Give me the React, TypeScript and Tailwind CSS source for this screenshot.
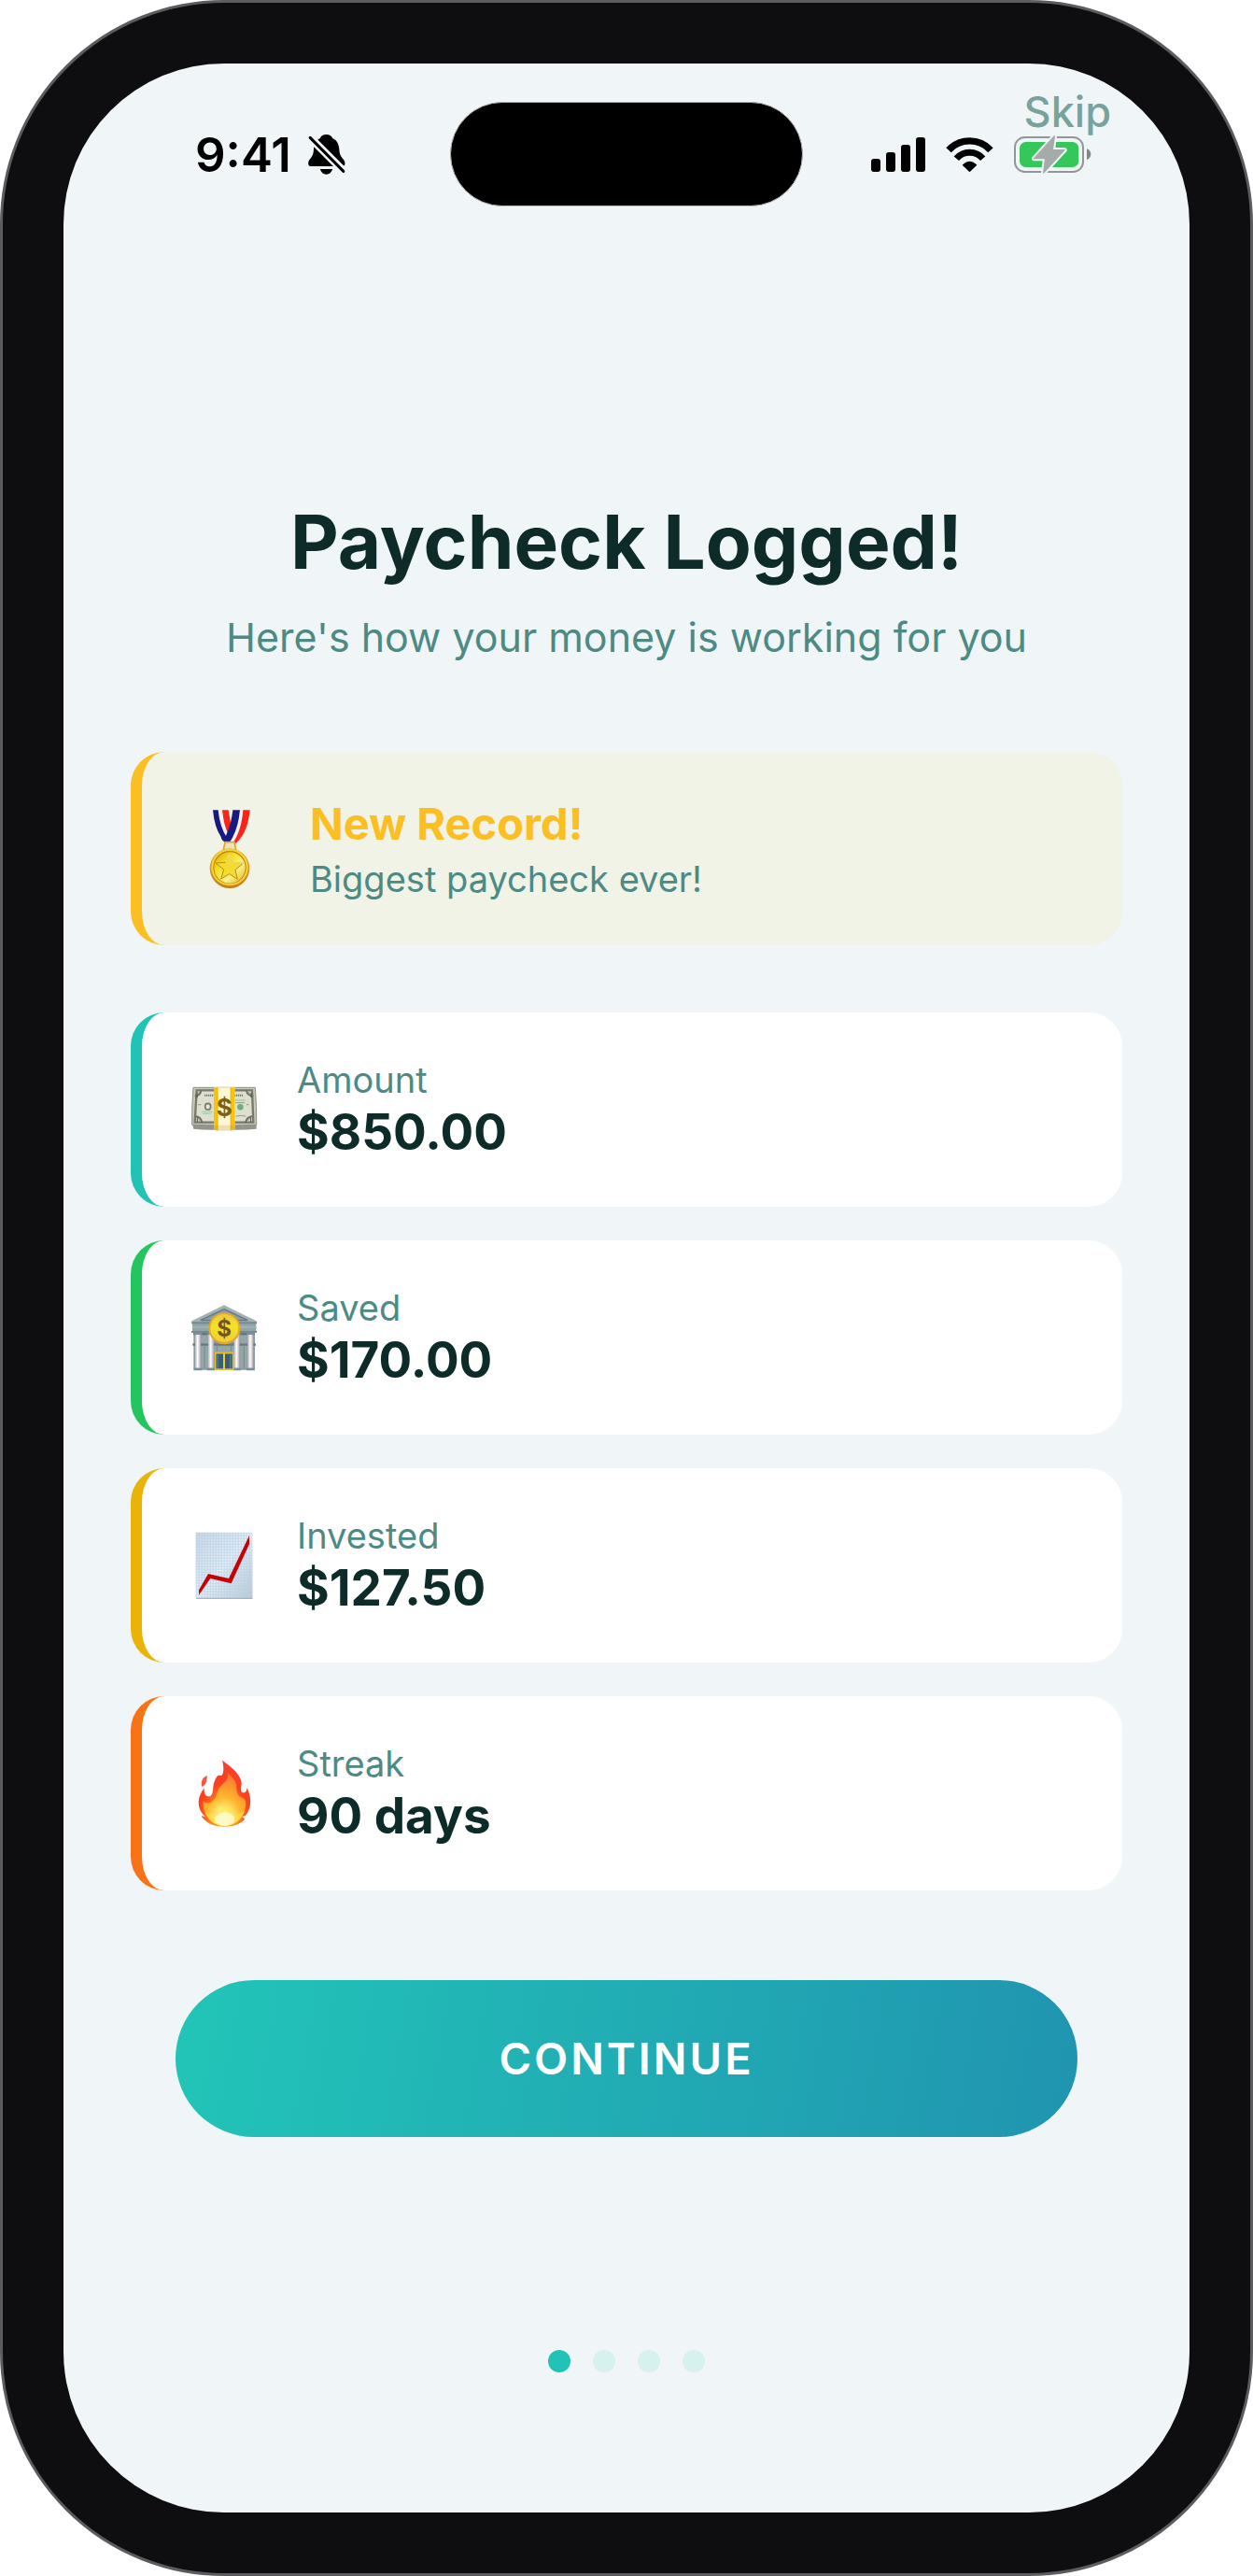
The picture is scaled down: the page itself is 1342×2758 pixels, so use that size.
import type { ReactNode } from 'react';

function BellOff() {
  return (
    <svg viewBox="419 45 119 129" className="w-10 h-[43px]" aria-hidden="true">
      <path d="M477 45C487 45 494 49 497 57C512 63 518 78 519 98C520 118 537 124 537 137Q537 147 527 147H429Q419 147 419 137C419 124 435 118 436 98C437 78 443 63 457 57C460 49 467 45 477 45Z" />
      <path d="M457 156H497Q492 173 477 173Q462 173 457 156Z" />
      <path d="M414 44L542 172" stroke="#f0f6f7" strokeWidth="25" />
      <path d="M425 55L532 163" stroke="#000" strokeWidth="9" strokeLinecap="round" />
    </svg>
  );
}

function Signal() {
  return (
    <svg viewBox="99 198 174 117" className="w-[58px] h-[39px]" aria-hidden="true">
      <rect x="99" y="270" width="30" height="42" rx="9" />
      <rect x="147" y="249" width="30" height="63" rx="9" />
      <rect x="195" y="225" width="30" height="87" rx="9" />
      <rect x="243" y="201" width="30" height="111" rx="9" />
    </svg>
  );
}

function Wifi() {
  return (
    <svg viewBox="339 198 153 117" className="w-[51px] h-[39px]" aria-hidden="true">
      <path d="M348 242A92 92 0 0 1 483 242" fill="none" stroke="#000" strokeWidth="22" />
      <path d="M373 269A56 56 0 0 1 458 269" fill="none" stroke="#000" strokeWidth="21" />
      <path d="M415.500 313L392 290Q415.500 266 439 290Z" />
    </svg>
  );
}

function Battery() {
  const bolt = 'M148 47L83 119H119L113 165L180 92H142Z';
  return (
    <svg viewBox="18 45 249 123" className="w-[83px] h-[41px]" aria-hidden="true">
      <rect x="21" y="51" width="219" height="111" rx="32" fill="none" stroke="#929697" strokeWidth="6" />
      <rect x="36" y="66" width="190" height="81" rx="20" fill="#34c759" />
      <path d="M252 88Q265 94 265 105Q265 117 252 123Z" fill="#838686" />
      <path d={bolt} fill="#f0f6f7" stroke="#f0f6f7" strokeWidth="16" strokeLinejoin="round" />
      <path d={bolt} fill="#a6aaa9" stroke="#a6aaa9" strokeWidth="4" strokeLinejoin="round" />
    </svg>
  );
}

function Medal() {
  return (
    <svg viewBox="72 49 132 252" className="w-11 h-[84px]" aria-hidden="true">
      <defs>
        <linearGradient id="medal-rim" x1="0" y1="0" x2="0" y2="1">
          <stop offset="0" stopColor="#e9b92f" />
          <stop offset="1" stopColor="#c47d1c" />
        </linearGradient>
        <linearGradient id="medal-face" x1="0" y1="0" x2="1" y2="1">
          <stop offset="0" stopColor="#d9a514" />
          <stop offset=".35" stopColor="#f7e022" />
          <stop offset=".65" stopColor="#fbf08a" />
          <stop offset="1" stopColor="#e3b413" />
        </linearGradient>
      </defs>
      <path d="M113 50H134Q138 75 143 100L132 140Q118 100 113 50Z" fill="#fb2418" />
      <path d="M100 50H114Q119 100 134 128L128 146Q106 110 100 50Z" fill="#f4f2f5" />
      <path d="M84 50H101Q106 105 130 140L124 153Q112 149 110 136Q89 105 84 50Z" fill="#171a80" />
      <path d="M169 50H183Q178 115 156 157H136Q162 110 169 50Z" fill="#f4f2f5" />
      <path d="M181 50H203Q196 125 157 157L149 155Q176 115 181 50Z" fill="#fb2418" />
      <path d="M148 50H171Q165 115 136 157H124Q117 150 128 127Q143 95 148 50Z" fill="#171a80" />
      <path d="M123 153H153L158 178H118Z" fill="#efe2bd" stroke="#dba832" strokeWidth="5" />
      <circle cx="138" cy="237" r="64" fill="url(#medal-rim)" />
      <circle cx="138" cy="234" r="59" fill="#f6d531" />
      <circle cx="138" cy="234" r="53" fill="#b97f14" />
      <circle cx="138" cy="235" r="50" fill="url(#medal-face)" />
      <path d="M136 192L149 219L181 221L156 242L163 272L137 255L110 271L119 241L93 220L125 218Z" fill="#f3db32" stroke="#b98a16" strokeWidth="3" strokeLinejoin="round" />
      <path d="M125 218L136 192L149 219L181 221" fill="none" stroke="#fbf08a" strokeWidth="3" />
    </svg>
  );
}

function Cash() {
  return (
    <svg viewBox="225 246 216 216" className="size-[72px]" aria-hidden="true">
      <path d="M227 396L232 416Q270 421 330 418Q390 421 434 416V395Z" fill="#92968a" />
      <path d="M231 283H430Q435 345 434 403Q330 408 227 403Q226 340 231 283Z" fill="#c8c9b8" stroke="#8c9085" strokeWidth="3" />
      <path d="M242 292H420L424 395H236Z" fill="#dedfcd" stroke="#77796c" strokeWidth="7" />
      <path d="M236 310Q256 310 256 291M424 310Q402 310 402 291M236 375Q257 375 259 397M424 375Q401 375 399 397" fill="#a5a698" stroke="#6b6c63" strokeWidth="5" />
      <path d="M243 300V316M417 300V316M244 379V394M416 379V394" stroke="#4f5049" strokeWidth="3" />
      <path d="M267 308H300M362 308H392" stroke="#77796c" strokeWidth="6" strokeDasharray="4 2" />
      <ellipse cx="278" cy="344" rx="9" ry="10" fill="#e6e6d9" stroke="#787a70" strokeWidth="5" />
      <circle cx="382" cy="346" r="10" fill="#6fae84" />
      <path d="M364 324H398M257 361H292M261 367H288" stroke="#9fc9a7" strokeWidth="4" strokeDasharray="5 1" />
      <path d="M366 332H396M368 376L382 373L400 375M246 338H256M402 338H410" fill="none" stroke="#96988b" strokeWidth="3" />
      <path d="M297 283H364V420Q330 424 297 420Z" fill="#fff6d2" />
      <path d="M297 283H310V421L297 419ZM351 283H364V419L351 421Z" fill="#fac405" />
      <path d="M309 283V421M351 283V421" stroke="#e9a900" strokeWidth="2" />
      <path d="M297 404H364V420Q330 424 297 420Z" fill="#a88b42" fillOpacity=".22" />
      <text x="331" y="375" textAnchor="middle" fontFamily="Inter, sans-serif" fontWeight="700" fontSize="78" fill="#80600c">$</text>
    </svg>
  );
}

function Bank() {
  return (
    <svg viewBox="225 228 216 216" className="size-[72px]" aria-hidden="true">
      <defs>
        <linearGradient id="bank-coin" x1="0" y1="0" x2="0" y2="1">
          <stop offset="0" stopColor="#f0c43c" />
          <stop offset=".4" stopColor="#f2e326" />
          <stop offset="1" stopColor="#edcf35" />
        </linearGradient>
        <linearGradient id="bank-column" x1="0" y1="0" x2="1" y2="0">
          <stop offset="0" stopColor="#b9b5bb" />
          <stop offset=".45" stopColor="#fff" />
          <stop offset="1" stopColor="#a9a5ad" />
        </linearGradient>
      </defs>
      <path d="M232 320H429V440H232Z" fill="#8b9b9f" />
      <path d="M256 322H280V434H256ZM297 360H364V384H297ZM382 322H406V434H382Z" fill="#94a6a8" />
      <path d="M231 325H429" stroke="#5d6f77" strokeWidth="6" />
      <path d="M229 359H432" stroke="#667982" strokeWidth="7" />
      <path d="M267 365V434M394 365V434M307 330V380M353 330V380" stroke="#758990" strokeWidth="3" />
      <path d="M330 232L434 283V291H226V283Z" fill="#a2b2b5" />
      <path d="M330 245L406 281H254Z" fill="#8b9ea2" stroke="#627681" strokeWidth="4" />
      <path d="M228 291H433V315H228Z" fill="#91a4a8" />
      <path d="M228 303H433" stroke="#9fb0b3" strokeWidth="8" />
      <path d="M225 318H435M226 289H435" stroke="#748990" strokeWidth="6" />
      {[246, 288, 371, 415].map((x) => (
        <g key={x}>
          <rect x={x - 9} y="322" width="18" height="112" fill="url(#bank-column)" />
          <path d={`M${x - 13} 323h26M${x - 13} 438h26`} stroke="#7b8f96" strokeWidth="8" />
        </g>
      ))}
      <path d="M302 386H359V438H302Z" fill="#385d73" stroke="#e6bd2d" strokeWidth="5" />
      <path d="M330 387V438" stroke="#f0cb36" strokeWidth="6" />
      <path d="M310 392V435M350 392V435" stroke="#527b91" strokeWidth="5" />
      <circle cx="331" cy="307" r="51" fill="#e4a82d" />
      <circle cx="331" cy="306" r="45" fill="url(#bank-coin)" />
      <text x="330" y="332" textAnchor="middle" fontFamily="Inter, sans-serif" fontWeight="700" fontSize="72" fill="#765524">$</text>
    </svg>
  );
}

function Chart() {
  return (
    <svg viewBox="225 240 216 216" className="size-[72px]" aria-hidden="true">
      <defs>
        <linearGradient id="chart-paper" x1="0" y1="0" x2="1" y2="1">
          <stop offset="0" stopColor="#cfd6dc" />
          <stop offset=".5" stopColor="#eef2f6" />
          <stop offset="1" stopColor="#bcc3cb" />
        </linearGradient>
        <pattern id="chart-grid" x="239" y="242" width="9" height="9" patternUnits="userSpaceOnUse">
          <path d="M0 1.500H9M1.500 0V9" stroke="#b3d2eb" strokeWidth="3" />
        </pattern>
      </defs>
      <path d="M239 242H421V455H239Z" fill="url(#chart-paper)" />
      <path d="M239 242H421V455H239Z" fill="url(#chart-grid)" fillOpacity=".8" />
      <path d="M240 454H421" stroke="#a5acb5" strokeWidth="3" />
      <path d="M249 427L279 375L345 390L411 252V280L353 406L286 390L249 443Z" fill="#c40305" />
    </svg>
  );
}

function Fire() {
  return (
    <svg viewBox="225 252 216 216" className="size-[72px]" aria-hidden="true">
      <defs>
        <radialGradient id="fire-outer" cx=".5" cy=".85" r=".8">
          <stop offset="0" stopColor="#ffcf28" />
          <stop offset=".45" stopColor="#fd6a22" />
          <stop offset=".62" stopColor="#fb4020" />
          <stop offset="1" stopColor="#f6412a" />
        </radialGradient>
        <radialGradient id="fire-inner" cx=".48" cy=".88" r=".85">
          <stop offset="0" stopColor="#fffde0" />
          <stop offset=".2" stopColor="#fff37a" />
          <stop offset=".5" stopColor="#ffb52c" />
          <stop offset="1" stopColor="#fd7434" />
        </radialGradient>
      </defs>
      <path d="M275 303C260 309 254 324 259 339C270 334 276 322 275 303Z" fill="#f7563c" />
      <path d="M324 254C352 274 389 303 386 333C383 350 384 357 390 358C399 359 403 354 403 343C412 356 416 379 414 393C413 408 408 422 398 432L388 435L397 443C380 461 357 467 331 467C304 467 280 461 260 438L257 432L270 436C254 422 248 406 248 388C249 369 257 354 267 343C264 357 269 369 280 370C291 371 294 356 295 341C297 322 304 308 311 302L323 303C330 291 329 272 324 254Z" fill="url(#fire-outer)" />
      <path d="M340 293C352 305 369 318 370 337C369 356 374 370 388 374C397 377 402 386 399 399C396 424 383 444 366 454C346 468 311 468 290 451C273 437 261 412 263 386C276 398 298 390 305 366C311 343 319 337 332 324C341 315 345 304 340 293Z" fill="url(#fire-inner)" />
      <path d="M263 403C278 448 304 430 315 420C326 408 337 397 343 405C350 419 368 443 397 411C389 447 365 465 331 466C299 466 273 443 263 403Z" fill="#ffe844" fillOpacity=".5" />
      <ellipse cx="332" cy="443" rx="32" ry="22" fill="#fffde8" fillOpacity=".7" />
    </svg>
  );
}

type Stat = { label: string; value: string; icon: ReactNode; border: string };

const stats: Stat[] = [
  { label: 'Amount', value: '$850.00', icon: <Cash />, border: 'border-[#21c3b7]' },
  { label: 'Saved', value: '$170.00', icon: <Bank />, border: 'border-[#22c55e]' },
  { label: 'Invested', value: '$127.50', icon: <Chart />, border: 'border-[#eab308]' },
  { label: 'Streak', value: '90 days', icon: <Fire />, border: 'border-[#f97316]' },
];

function StatCard({ label, value, icon, border }: Stat) {
  return (
    <div className={`flex items-center gap-9 rounded-[36px] border-l-[12px] bg-white p-12 ${border}`}>
      <div className="flex w-[82px] shrink-0 justify-center">{icon}</div>
      <div>
        <p className="text-[38px] leading-12 text-[#4d8a84]">{label}</p>
        <p className="text-[53px] leading-16 font-bold text-[#0d2b28]">{value}</p>
      </div>
    </div>
  );
}

export default function App() {
  return (
    <div className="flex min-h-screen flex-col bg-white font-['Inter',sans-serif]">
      <div className="flex flex-1 flex-col rounded-[240px] border-[3px] border-[#5c5c60] bg-[#0e0e10] p-[65px]">
        <div className="relative flex flex-1 flex-col rounded-[172px] bg-[#f0f6f7]">
          <header className="grid grid-cols-[1fr_378px_1fr] items-center pt-[41px] pb-[83px]">
            <div className="flex items-center gap-[18px] pl-[141px]">
              <span className="text-[51px] leading-none font-semibold text-black">9:41</span>
              <BellOff />
            </div>
            <div className="h-28 rounded-full border border-[#b4b6b6] bg-black" />
            <div className="flex items-center gap-[22px] pl-[73px]">
              <Signal />
              <Wifi />
              <Battery />
            </div>
          </header>

          <button className="absolute top-7 right-[84px] text-[45px] leading-12 font-medium text-[#7aa29c]">Skip</button>

          <main className="flex flex-1 flex-col justify-center px-[72px]">
            <h1 className="text-center text-[80px] leading-24 font-bold text-[#0d2b28]">Paycheck Logged!</h1>
            <p className="mt-[26px] text-center text-[43px] leading-14 text-[#4d8a84]">Here's how your money is working for you</p>

            <div className="mt-[95px] flex items-center gap-10 rounded-[36px] border-l-[12px] border-[#fbbf24] bg-[#f0f3e6] px-12 py-11">
              <div className="flex w-[92px] shrink-0 justify-center"><Medal /></div>
              <div>
                <h2 className="text-[47px] leading-[66px] font-bold text-[#fbbf24]">New Record!</h2>
                <p className="text-[38px] leading-[53px] text-[#4d8a84]">Biggest paycheck ever!</p>
              </div>
            </div>

            <div className="mt-18 flex flex-col gap-9">
              {stats.map((s) => <StatCard key={s.label} {...s} />)}
            </div>

            <button className="mx-12 mt-24 h-42 rounded-full bg-[linear-gradient(100deg,#22c5b8,#2094b0)] text-[47px] font-semibold tracking-[3px] text-white">
              CONTINUE
            </button>
          </main>

          <div className="flex justify-center gap-6 pb-[150px]">
            {[0, 1, 2, 3].map((i) => (
              <span key={i} className={`size-6 rounded-full ${i === 0 ? 'bg-[#21c3b7]' : 'bg-[#d7f1ee]'}`} />
            ))}
          </div>
        </div>
      </div>
    </div>
  );
}
